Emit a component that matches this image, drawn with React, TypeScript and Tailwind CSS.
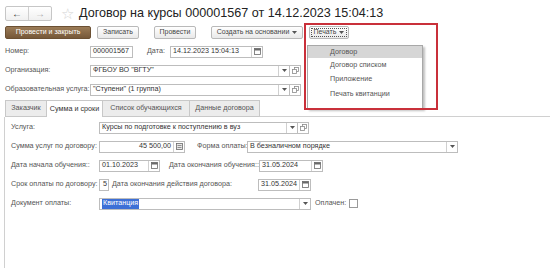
import React from 'react';

const font = { fontFamily: '"Liberation Sans", Arial, sans-serif' };

function DropArrow() {
    return (
        <svg width="5" height="3" viewBox="0 0 5 3">
            <path d="M0 0 L5 0 L2.5 3 Z" fill="#555" />
        </svg>
    );
}

function OpenIcon() {
    return (
        <svg width="7" height="7" viewBox="0 0 7 7" fill="none" stroke="#8a8a8a" strokeWidth="0.8">
            <rect x="2.5" y="0.5" width="4" height="4" />
            <rect x="0.5" y="2.5" width="4" height="4" fill="white" />
        </svg>
    );
}

function CalIcon() {
    return (
        <svg width="7" height="7" viewBox="0 0 7 7">
            <rect x="0.5" y="0.5" width="6" height="6" fill="white" stroke="#6a6a6a" strokeWidth="0.8" />
            <rect x="0.5" y="0.5" width="6" height="2" fill="#6a6a6a" />
        </svg>
    );
}

function CalcIcon() {
    return (
        <svg width="7" height="7" viewBox="0 0 7 7">
            <rect x="0.5" y="0.5" width="6" height="6" fill="#e8e8e8" stroke="#6a6a6a" strokeWidth="0.8" />
            <path d="M1.5 2.5 H5.5 M1.5 4.5 H5.5" stroke="#6a6a6a" strokeWidth="0.7" />
        </svg>
    );
}

// text box with optional right-side button segment
function Field({
    w,
    value,
    right,
    btn,
    selected,
}: {
    w: number;
    value: string;
    right?: boolean;
    btn?: 'drop' | 'cal' | 'calc';
    selected?: boolean;
}) {
    return (
        <div
            className="h-[12px] border border-[#bdbdbd] bg-white flex items-stretch shrink-0"
            style={{ width: w }}
        >
            <div
                className={`flex-1 flex items-center px-[2px] text-[7.2px] text-[#333] whitespace-nowrap overflow-hidden ${right ? 'justify-end' : ''}`}
            >
                {selected ? <span className="bg-[#3d6fd6] text-white px-[1px]">{value}</span> : value}
            </div>
            {btn && (
                <div className="w-[11px] border-l border-[#d0d0d0] flex items-center justify-center">
                    {btn === 'drop' && <DropArrow />}
                    {btn === 'cal' && <CalIcon />}
                    {btn === 'calc' && <CalcIcon />}
                </div>
            )}
        </div>
    );
}

function OpenBtn() {
    return (
        <div className="h-[12px] w-[11px] border border-l-0 border-[#bdbdbd] bg-white flex items-center justify-center shrink-0">
            <OpenIcon />
        </div>
    );
}

function Label({ children, w }: { children: React.ReactNode; w?: number }) {
    return (
        <div className="text-[7.2px] text-[#555] whitespace-nowrap shrink-0" style={w ? { width: w } : undefined}>
            {children}
        </div>
    );
}

function GrayBtn({ children, w }: { children: React.ReactNode; w: number }) {
    return (
        <div
            className="h-[13px] border border-[#b9b9b9] rounded-[2px] bg-gradient-to-b from-white to-[#e9e9e9] flex items-center justify-center gap-[3px] text-[7px] text-[#444] shrink-0"
            style={{ width: w }}
        >
            {children}
        </div>
    );
}

export default function App() {
    const tabs = ['Заказчик', 'Сумма и сроки', 'Список обучающихся', 'Данные договора'];
    const tabW = [42, 56, 87, 70];
    const menu = ['Договор', 'Договор списком', 'Приложение', 'Печать квитанции'];

    return (
        <div className="w-[550px] h-[268px] bg-white relative overflow-hidden" style={font}>
            {/* title row */}
            <div className="h-[22px] pt-[5px] pl-[5px] flex items-center">
                <div className="h-[15px] w-[47px] border border-[#c6c6c6] rounded-[2px] flex bg-gradient-to-b from-white to-[#f0f0f0]">
                    <div className="flex-1 flex items-center justify-center text-[10px] text-[#333] border-r border-[#d0d0d0]">←</div>
                    <div className="flex-1 flex items-center justify-center text-[10px] text-[#aaa]">→</div>
                </div>
                <div className="ml-[9px] text-[15px] leading-none text-[#d4d4d4]">☆</div>
                <div className="ml-[5px] text-[12.6px] leading-none text-[#222] whitespace-nowrap">
                    Договор на курсы 000001567 от 14.12.2023 15:04:13
                </div>
            </div>

            {/* command bar */}
            <div className="mt-[4px] pl-[5px] flex items-center">
                <div className="h-[13px] w-[86px] rounded-[2px] bg-gradient-to-b from-[#9c7c57] to-[#765839] border border-[#6b5033] flex items-center justify-center text-[7px] text-white shrink-0">
                    Провести и закрыть
                </div>
                <div className="ml-[6px]"><GrayBtn w={42}>Записать</GrayBtn></div>
                <div className="ml-[15px]"><GrayBtn w={42}>Провести</GrayBtn></div>
                <div className="ml-[15px]"><GrayBtn w={92}>Создать на основании <DropArrow /></GrayBtn></div>
                <div className="ml-[6px] h-[13px] w-[40px] border border-[#b9b9b9] rounded-[2px] bg-gradient-to-b from-white to-[#e9e9e9] p-[1px] shrink-0">
                    <div className="h-full border border-dotted border-[#555] flex items-center justify-center gap-[3px] text-[7px] text-[#444]">
                        Печать <DropArrow />
                    </div>
                </div>
            </div>

            {/* header fields */}
            <div className="mt-[3px] pl-[5px]">
                <div className="h-[19px] flex items-center">
                    <Label w={85}>Номер:</Label>
                    <Field w={43} value="000001567" />
                    <div className="ml-[14px]"><Label w={23}>Дата:</Label></div>
                    <Field w={93} value="14.12.2023 15:04:13" btn="cal" />
                </div>
                <div className="h-[19px] flex items-center">
                    <Label w={85}>Организация:</Label>
                    <Field w={200} value={'ФГБОУ ВО "ВГТУ"'} btn="drop" />
                    <OpenBtn />
                </div>
                <div className="h-[19px] flex items-center">
                    <Label w={85}>Образовательная услуга:</Label>
                    <Field w={200} value={'"Ступени" (1 группа)'} btn="drop" />
                    <OpenBtn />
                </div>
            </div>

            {/* tabs */}
            <div className="mt-[1px] pl-[5px] flex items-end h-[17px]">
                {tabs.map((t, i) => (
                    <div
                        key={t}
                        className={`h-[17px] flex items-center justify-center text-[7.2px] shrink-0 border-t border-r border-[#c8c8c8] ${i === 0 ? 'border-l' : ''} ${i === 1 ? 'bg-white text-[#333]' : 'bg-[#ececec] text-[#555] border-b'}`}
                        style={{ width: tabW[i] }}
                    >
                        {t}
                    </div>
                ))}
                <div className="flex-1 border-b border-[#d0d0d0]" />
            </div>

            {/* tab panel */}
            <div className="ml-[4px] border-l border-[#d0d0d0] h-[160px] pl-[6px] pt-[1px]">
                <div className="h-[19px] flex items-center">
                    <Label w={88}>Услуга:</Label>
                    <Field w={199} value="Курсы по подготовке к поступлению в вуз" btn="drop" />
                    <OpenBtn />
                </div>
                <div className="h-[19px] flex items-center">
                    <Label w={88}>Сумма услуг по договору:</Label>
                    <Field w={86} value="45 500,00" right btn="calc" />
                    <div className="ml-[12px]"><Label w={50}>Форма оплаты:</Label></div>
                    <Field w={211} value="В безналичном порядке" btn="drop" />
                </div>
                <div className="h-[19px] flex items-center">
                    <Label w={88}>Дата начала обучения::</Label>
                    <Field w={61} value="01.10.2023" btn="cal" />
                    <div className="ml-[9px]"><Label w={90}>Дата окончания обучения::</Label></div>
                    <Field w={64} value="31.05.2024" btn="cal" />
                </div>
                <div className="h-[19px] flex items-center">
                    <Label w={88}>Срок оплаты по договору:</Label>
                    <div className="h-[12px] w-[10px] border border-[#bdbdbd] bg-white flex items-center justify-end pr-[1px] text-[7.2px] text-[#333] shrink-0">5</div>
                    <div className="ml-[3px]"><Label w={146}>Дата окончания действия договора:</Label></div>
                    <Field w={53} value="31.05.2024" btn="cal" />
                </div>
                <div className="h-[19px] flex items-center">
                    <Label w={88}>Документ оплаты:</Label>
                    <Field w={212} value="Квитанция" btn="drop" selected />
                    <div className="ml-[4px]"><Label>Оплачен:</Label></div>
                    <div className="ml-[3px] w-[9px] h-[9px] border border-[#9a9a9a] bg-white" />
                </div>
            </div>

            {/* print submenu */}
            <div className="absolute left-[307px] top-[45px] w-[116px] bg-white border border-[#a8a8a8] shadow-[2px_2px_2px_rgba(0,0,0,0.25)] pb-[6px]">
                {menu.map((m, i) => (
                    <div
                        key={m}
                        className={`flex items-center pl-[22px] text-[7.2px] text-[#555] ${i === 0 ? 'h-[12px] bg-[#d6d6d6]' : 'h-[14.5px]'}`}
                    >
                        {m}
                    </div>
                ))}
            </div>

            {/* highlight frame */}
            <div className="absolute left-[304px] top-[23px] w-[134px] h-[87px] border-2 border-[#c9303a]" />
        </div>
    );
}
